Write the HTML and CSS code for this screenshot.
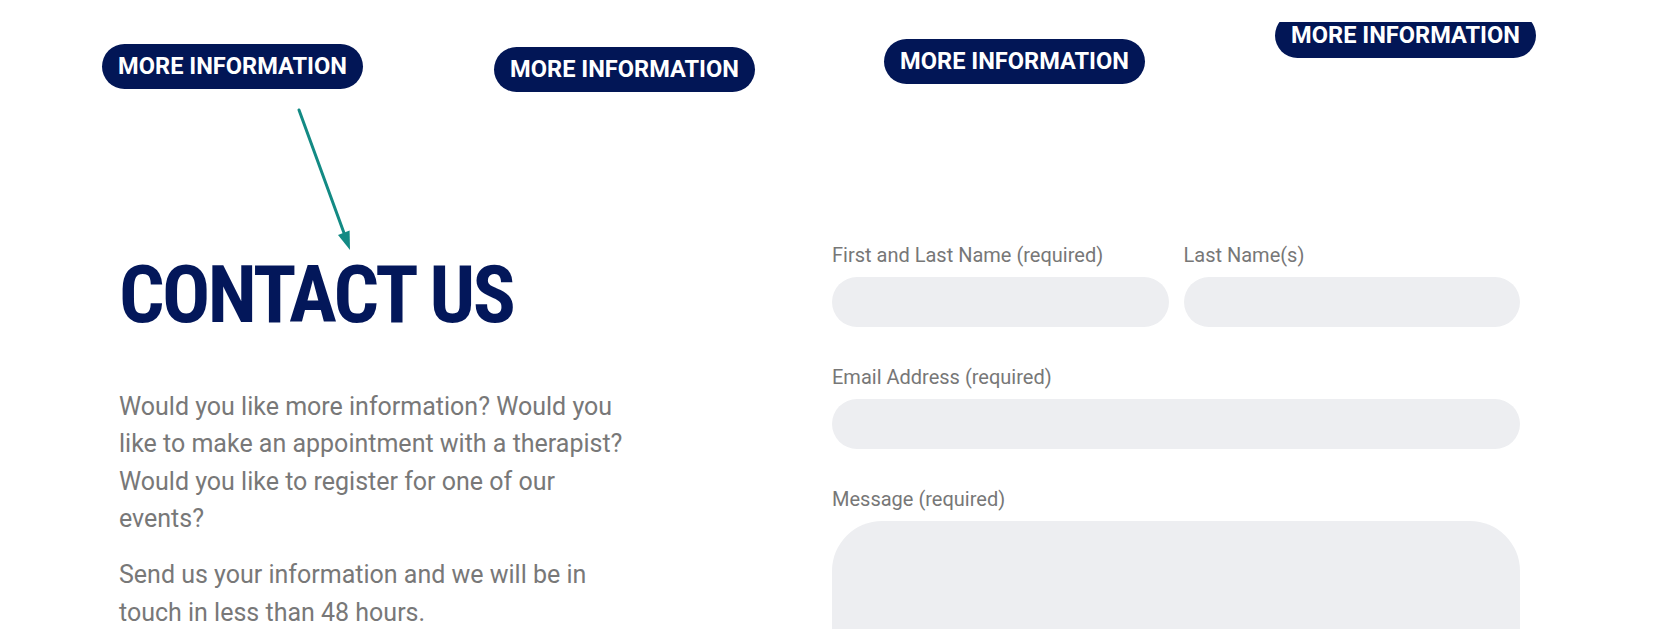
FILE: index.html
```html
<!DOCTYPE html>
<html lang="en">
<head>
<meta charset="utf-8">
<title>Contact Us</title>
<link rel="stylesheet" href="styles.css">
</head>
<body>
<div class="page">
  <section class="cards">
    <div class="card card-1"><a class="btn" href="#">MORE INFORMATION</a></div>
    <div class="card card-2"><a class="btn" href="#">MORE INFORMATION</a></div>
    <div class="card card-3"><a class="btn" href="#">MORE INFORMATION</a></div>
    <div class="card card-4"><a class="btn" href="#">MORE INFORMATION</a></div>
  </section>

  <svg class="arrow" width="90" height="160" viewBox="0 0 90 160" aria-hidden="true">
    <line x1="19" y1="10" x2="64" y2="133" stroke="#138a84" stroke-width="3" stroke-linecap="round"/>
    <polygon points="70,150 69.6,130.6 58,135" fill="#138a84"/>
  </svg>

  <section class="contact">
    <div class="intro">
      <h1 class="title">CONTACT US</h1>
      <p class="lead">Would you like more information? Would you like to make an appointment with a therapist? Would you like to register for one of our events?</p>
      <p class="lead">Send us your information and we will be in touch in less than 48 hours.</p>
    </div>
    <form class="form">
      <div class="row">
        <div class="field">
          <label class="label">First and Last Name (required)</label>
          <input class="input" type="text">
        </div>
        <div class="field">
          <label class="label">Last Name(s)</label>
          <input class="input" type="text">
        </div>
      </div>
      <div class="field">
        <label class="label">Email Address (required)</label>
        <input class="input" type="email">
      </div>
      <div class="field">
        <label class="label">Message (required)</label>
        <textarea class="textarea"></textarea>
      </div>
    </form>
  </section>
</div>
</body>
</html>
```

FILE: styles.css
```css
html, body {
  margin: 0;
  padding: 0;
  height: 629px;
  overflow: hidden;
  background: #ffffff;
}

.page {
  position: relative;
  font-family: "Roboto", "Liberation Sans", sans-serif;
}

.cards {
  display: grid;
  grid-template-columns: repeat(4, 261px);
  column-gap: 130px;
  padding-left: 102px;
  height: 110px;
  align-items: start;
}

.btn {
  display: block;
  width: 261px;
  height: 45px;
  line-height: 45px;
  border-radius: 23px;
  background: #021656;
  color: #ffffff;
  text-align: center;
  text-decoration: none;
  font-size: 23.6px;
  font-weight: 700;
  white-space: nowrap;
}

.card-1 .btn { margin-top: 44px; }
.card-2 .btn { margin-top: 47px; margin-left: 1px; }
.card-3 .btn { margin-top: 39px; }
.card-4 .btn { margin-top: 13px; clip-path: inset(9px 0 0 0); }

.arrow {
  position: absolute;
  left: 280px;
  top: 100px;
}

.contact {
  display: grid;
  grid-template-columns: 506px 688px;
  column-gap: 207px;
  padding-left: 119px;
  padding-top: 132px;
  align-items: start;
}

.title {
  margin: 9px 0 0 0;
  font-family: "Roboto Condensed", "Roboto", sans-serif;
  font-stretch: condensed;
  font-size: 80px;
  line-height: 88px;
  font-weight: 700;
  letter-spacing: -2.6px;
  color: #03175a;
}

.lead {
  margin: 48.6px 0 0 0;
  font-size: 25px;
  line-height: 37.5px;
  color: #787878;
}

.lead + .lead {
  margin-top: 18.5px;
}

.form {
  display: flex;
  flex-direction: column;
  gap: 37px;
}

.row {
  display: grid;
  grid-template-columns: 1fr 1fr;
  column-gap: 15px;
}

.field {
  display: flex;
  flex-direction: column;
  gap: 8px;
}

.label {
  font-size: 20px;
  line-height: 27px;
  color: #777777;
}

.input {
  box-sizing: border-box;
  height: 50px;
  border: none;
  border-radius: 25px;
  background: #edeef1;
  width: 100%;
  outline: none;
}

.textarea {
  box-sizing: border-box;
  height: 220px;
  border: none;
  border-radius: 50px;
  background: #edeef1;
  width: 100%;
  resize: none;
  outline: none;
}
```
